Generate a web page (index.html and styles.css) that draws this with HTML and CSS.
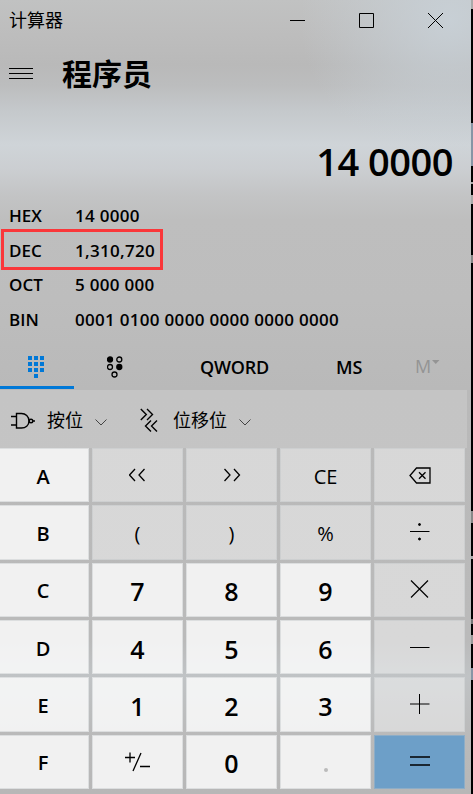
FILE: index.html
```
<!DOCTYPE html>
<html lang="zh-CN">
<head>
<meta charset="utf-8">
<title>计算器</title>
<link rel="stylesheet" href="styles.css">
</head>
<body>
<div class="desktop">
<main class="window">
  <header class="titlebar">
    <span class="title">计算器</span>
    <svg class="controls" width="156" height="18" viewBox="0 0 156 18"><path d="M1 8.500h15M70.500 1.500h14v14h-14zM139 1l15 15M154 1l-15 15"/></svg>
  </header>
  <div class="mode">
    <svg width="24" height="12" viewBox="0 0 24 12"><path d="M0 .5h24M0 5.500h24M0 10.500h24"/></svg>
    <h1>程序员</h1>
  </div>
  <div class="display">14 0000</div>
  <div class="bases">
    <div class="base"><span>HEX</span><span>14 0000</span></div>
    <div class="base selected"><span>DEC</span><span>1,310,720</span></div>
    <div class="base"><span>OCT</span><span>5 000 000</span></div>
    <div class="base"><span>BIN</span><span>0001 0100 0000 0000 0000 0000</span></div>
  </div>
  <nav class="tabs">
    <div class="tab active"><svg width="16" height="22" viewBox="0 0 16 22"><path class="dots" d="M0 0h4v4H0zM6 0h4v4H6zM12 0h4v4h-4zM0 6h4v4H0zM6 6h4v4H6zM12 6h4v4h-4zM0 12h4v4H0zM6 12h4v4H6zM12 12h4v4h-4zM6 18h4v4H6z"/></svg></div>
    <div class="tab bits"><svg width="16" height="22" viewBox="0 0 16 22"><g class="rings"><circle class="fill" cx="3" cy="3.500" r="2.500"/><circle cx="12.300" cy="3.500" r="2.500"/><circle cx="3" cy="11" r="2.500"/><circle class="fill" cx="12.300" cy="11" r="2.500"/><circle cx="7.500" cy="18.500" r="2.500"/></g></svg></div>
    <div class="tab word">QWORD</div>
    <div class="tab store">MS</div>
    <div class="tab memory">M<svg width="8" height="4" viewBox="0 0 8 4"><path d="M0 0h7.500L3.750 4z"/></svg></div>
  </nav>
  <div class="tools">
    <svg class="gate" width="25" height="18" viewBox="0 0 25 18"><path d="M5.500 1.500h5c4 0 7.500 3 7.500 7.500s-3.500 7-7.500 7h-5zM0 4.500h5.500M0 13h5.500M22 9h2"/><circle cx="20" cy="9" r="1.800"/></svg>
    <span class="bitwise">按位</span>
    <svg class="chevron" width="12" height="7" viewBox="0 0 12 7"><path d="M.5.5L6 6 11.500.5"/></svg>
    <svg class="shift" width="18" height="25" viewBox="0 0 18 25"><path d="M.8 1l5.500 5.500L.8 12M7 1l5.500 5.500L7 12M11 12.500l-5.500 5.500 5.500 5.500M17 12.500L11.500 18l5.500 5.500"/></svg>
    <span class="shifting">位移位</span>
    <svg class="chevron" width="12" height="7" viewBox="0 0 12 7"><path d="M.5.5L6 6 11.500.5"/></svg>
  </div>
  <section class="keys">
    <button class="key letter">A</button>
    <button class="key op angle"><svg width="18" height="14" viewBox="0 0 18 14"><path d="M6 1L.5 7l5.500 6M15.500 1L10 7l5.500 6"/></svg></button>
    <button class="key op angle"><svg width="18" height="14" viewBox="0 0 18 14"><path d="M1.500 1L7 7l-5.500 6M11 1l5.500 6-5.500 6"/></svg></button>
    <button class="key op ce">CE</button>
    <button class="key op"><svg width="22" height="17" viewBox="0 0 22 17"><path class="back" d="M7.500 1h13.500v15H7.500L1 8.500zM10 5.300l6.500 6.500M16.500 5.300L10 11.800"/></svg></button>

    <button class="key letter">B</button>
    <button class="key op paren">(</button>
    <button class="key op paren">)</button>
    <button class="key op percent">%</button>
    <button class="key op"><svg width="20" height="18" viewBox="0 0 20 18"><path d="M0 8.500h19.500"/><circle class="fill" cx="9.500" cy="1.500" r="1"/><circle class="fill" cx="9.500" cy="16" r="1"/></svg></button>

    <button class="key letter">C</button>
    <button class="key">7</button>
    <button class="key">8</button>
    <button class="key">9</button>
    <button class="key op"><svg class="times" width="20" height="20" viewBox="0 0 20 20"><path d="M1 .5l17 17M18 .5l-17 17"/></svg></button>

    <button class="key letter">D</button>
    <button class="key">4</button>
    <button class="key">5</button>
    <button class="key">6</button>
    <button class="key op"><svg width="20" height="20" viewBox="0 0 20 20"><path d="M0 10.500h19.500"/></svg></button>

    <button class="key letter">E</button>
    <button class="key">1</button>
    <button class="key">2</button>
    <button class="key">3</button>
    <button class="key op"><svg width="20" height="20" viewBox="0 0 20 20"><path d="M0 10h19.500M9.500 0v20"/></svg></button>

    <button class="key letter">F</button>
    <button class="key sign"><svg width="25" height="20" viewBox="0 0 25 20"><path d="M0 5.500h10M5 .5v10M16 1L8 19M15 14.500h10"/></svg></button>
    <button class="key">0</button>
    <button class="key point"><i></i></button>
    <button class="key equals"><svg width="20" height="20" viewBox="0 0 20 20"><path d="M0 5h20M0 13h20"/></svg></button>
  </section>
</main>
<div class="edge"></div>
</div>
</body>
</html>
```
FILE: styles.css
```
*, *::after { box-sizing: border-box; }
body { margin: 0; font-family: "Open Sans", "Noto Sans", "Noto Sans CJK SC", sans-serif; color: #000; }
svg { display: block; flex: none; fill: none; stroke: #000; stroke-width: 1; }
.desktop { display: flex; width: 473px; height: 794px; overflow: hidden; }
.window {
  width: 471px; height: 794px;
  background:
    radial-gradient(ellipse 150px 140px at 450px 20px, rgba(201,210,217,.85) 0%, rgba(201,210,217,0) 100%),
    linear-gradient(#c1c2c2 0, #bdbdbd 35px, #b9b9b9 65px, #bcbdbe 85px, #c5c9cc 112px, #cfd4d8 145px, #cbced1 170px, #c3c4c5 195px, #bebebe 220px, #bdbdbd 300px, #b9b9b9 389px, #bababa 640px, #c0c3c5 676px, #bababa 735px, #b7b7b7 794px);
}
.edge {
  width: 2px; height: 794px;
  background: linear-gradient(#aaa 0 9px, #000 9px 123px, #8795a5 123px 166px, #000 166px 182px, #aaa 182px 184px, #000 184px 195px, #aaa 195px 204px, #000 204px 255px, #888 255px 263px, #000 263px 511px, #888 511px 523px, #000 523px 556px, #aaa 556px 559px, #000 559px 619px, #777 619px 624px, #000 624px 635px, #999 635px 644px, #000 644px 668px, #8795a5 668px 680px, #000 680px);
}
.titlebar { display: flex; justify-content: space-between; height: 42px; padding: 12px 26px 0 9px; }
.title { margin-top: -2px; font: 400 18px/18px "Noto Sans CJK SC", sans-serif; }
.mode { display: flex; align-items: center; height: 63px; padding-left: 9px; gap: 29px; }
.mode h1 { margin: -4px 0 0; font: 700 30px/40px "Noto Sans CJK SC", sans-serif; }
.display { height: 95px; padding: 29px 18px 0 0; font-size: 38px; font-weight: 600; line-height: 54px; letter-spacing: -.5px; text-align: right; }
.bases { height: 145px; padding-top: 0; margin-top: -1px; margin-bottom: 1px; }
.base { display: flex; height: 34.600px; align-items: center; padding-left: 9px; font-size: 17px; font-weight: 550; line-height: 24px; }
.base span:first-child { width: 66px; }
.base span:last-child { letter-spacing: .3px; }
.selected { position: relative; }
.selected::after { content: ""; position: absolute; left: 1px; top: -5px; width: 162px; height: 41px; border: 3px solid #fa373a; }
.tabs { display: flex; height: 45px; font-size: 18px; font-weight: 600; line-height: 45px; }
.tab { flex: none; }
.active { width: 74px; padding: 11px 0 0 28px; border-bottom: 3px solid #0078d7; height: 44px; }
.dots { fill: #0078d7; stroke: none; }
.bits { width: 126px; padding: 11px 0 0 33px; }
.rings { stroke-width: 1.300; }
.fill { fill: #000; }
.word { width: 136px; letter-spacing: -.2px; }
.store { width: 79px; }
.memory { display: flex; color: #949494; font-weight: 400; line-height: 43px; }
.memory svg { margin: 15px 0 0 1px; fill: #949494; stroke: none; }
.tools { display: flex; align-items: center; width: 467px; height: 58px; padding: 3px 0 0 11px; background: rgba(255,255,255,.17); font: 400 18px/26px "Noto Sans CJK SC", sans-serif; }
.gate, .shift { stroke-width: 1.400; }
.bitwise { margin: -3px 0 0 11px; }
.chevron { margin: 4px 0 0 12px; stroke: #444; }
.shift { margin-left: 33px; }
.shifting { margin: -3px 0 0 15px; }
.keys { display: grid; grid-template-columns: 89px repeat(4, 91px); grid-template-rows: repeat(6, 1fr); gap: 3px; height: 341px; }
.key { display: flex; align-items: center; justify-content: center; min-width: 0; min-height: 0; margin: 0; padding: 3px 0 0; border: 1px solid rgba(190,195,197,.4); border-radius: 0; background: rgba(255,255,255,.8); background-clip: border-box; color: #000; font: 600 25px/30px "Open Sans", sans-serif; }
.letter { border-left: 0; font-size: 20px; padding-right: 2px; }
.op { padding-top: 0; background: rgba(255,255,255,.43); font-weight: 400; }
.angle svg { stroke-width: 1.300; }
.back { stroke-width: 1.300; }
.times { stroke-width: 1.200; }
.ce, .percent, .paren { font-size: 20px; padding-top: 3px; font-weight: 400; }
.sign { padding-top: 0; }
.sign svg { stroke-width: 1.300; }
.point { padding: 16px 0 0; }
.point i { width: 4px; height: 4px; border-radius: 50%; background: #bbb; }
.equals { padding-top: 0; background: #6d9fc8; }
.equals svg { stroke-width: 1.500; }
```
